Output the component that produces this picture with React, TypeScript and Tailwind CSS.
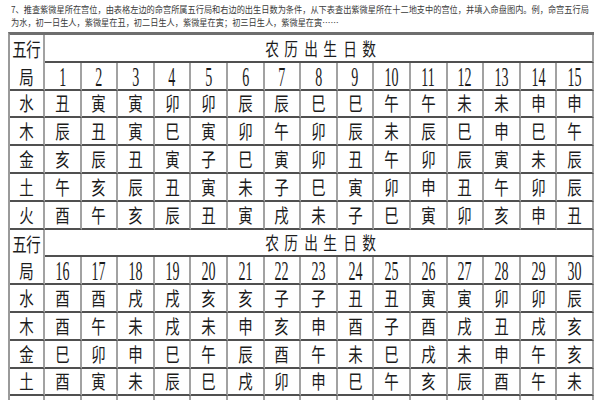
import React from "react";

const top1 =
  "7、推查紫微星所在宫位，由表格左边的命宫所属五行局和右边的出生日数为条件，从下表查出紫微星所在十二地支中的宫位，并填入命盘图内。例，命宫五行局";
const top2 =
  "为水，初一日生人，紫微星在丑，初二日生人，紫微星在寅；初三日生人，紫微星在寅……";

const elems = ["水", "木", "金", "土", "火"];
const data: string[] = [
  "丑寅寅卯卯辰辰巳巳午午未未申申酉酉戌戌亥亥子子丑丑寅寅卯卯辰",
  "辰丑寅巳寅卯午卯辰未辰巳申巳午酉午未戌未申亥申酉子酉戌丑戌亥",
  "亥辰丑寅子巳寅卯丑午卯辰寅未辰巳卯申巳午辰酉午未巳戌未申午亥",
  "午亥辰丑寅未子巳寅卯申丑午卯辰酉寅未辰巳戌卯申巳午亥辰酉午未",
  "酉午亥辰丑寅戌未子巳寅卯亥申丑午卯辰子酉寅未辰巳丑戌卯申巳午",
];

const cell =
  "flex items-center justify-center h-[27.8px] border-r-2 border-b-2 border-r-[#a2a2a2] border-b-[#505050]";

function Ch({ c, w = 14, size = "text-[19px]" }: { c: string; w?: number; size?: string }) {
  return (
    <span className="inline-flex justify-center" style={{ width: w }}>
      <span className={`inline-block scale-x-[0.76] leading-[22px] text-[#1c1c1c] ${size}`}>{c}</span>
    </span>
  );
}

function Num({ n }: { n: number }) {
  return (
    <span className="inline-block scale-x-[0.52] text-[27px] leading-[24px] text-[#1c1c1c] font-['Liberation_Serif',serif] mt-[2px]">
      {n}
    </span>
  );
}

function Table({ start, top }: { start: number; top?: boolean }) {
  const days = Array.from({ length: 15 }, (_, i) => start + i);
  return (
    <div
      className={`grid grid-cols-[35px_repeat(15,minmax(0,1fr))] border-l-2 border-l-[#9a9a9a] ${
        top ? "border-t-[3px] border-t-[#6e6e6e]" : ""
      }`}
    >
      <div className="row-span-2 flex flex-col items-center justify-between border-r-2 border-b-2 border-r-[#a2a2a2] border-b-[#505050] pt-[3px] pb-[1px]">
        <div className="flex">
          <Ch c="五" w={14} />
          <Ch c="行" w={14} />
        </div>
        <Ch c="局" w={14} />
      </div>
      <div className={`col-span-15 ${cell} border-b-[#6a6a6a]`}>
        <div className="flex ml-[4px]">
          {"农历出生日数".split("").map((c, i) => (
            <Ch key={i} c={c} w={19.5} size="text-[18px]" />
          ))}
        </div>
      </div>
      {days.map((d) => (
        <div key={d} className={cell}>
          <Num n={d} />
        </div>
      ))}
      {elems.map((e, r) => (
        <React.Fragment key={e}>
          <div className={cell}>
            <Ch c={e} />
          </div>
          {days.map((d) => (
            <div key={d} className={cell}>
              <Ch c={data[r][d - 1]} />
            </div>
          ))}
        </React.Fragment>
      ))}
    </div>
  );
}

export default function App() {
  return (
    <div className="w-[600px] h-[400px] overflow-hidden bg-white font-['Noto_Sans_CJK_SC','Noto_Sans',sans-serif]">
      <div className="ml-[8px] w-[586px]">
        <div className="h-[32px] pt-[3px] pl-[3px] text-[#3a3a3a] text-[9px] leading-[13px]">
          <div className="whitespace-nowrap origin-left scale-x-[0.91]">{top1}</div>
          <div className="whitespace-nowrap origin-left scale-x-[0.91]">{top2}</div>
        </div>
        <Table start={1} top />
        <Table start={16} />
      </div>
    </div>
  );
}
